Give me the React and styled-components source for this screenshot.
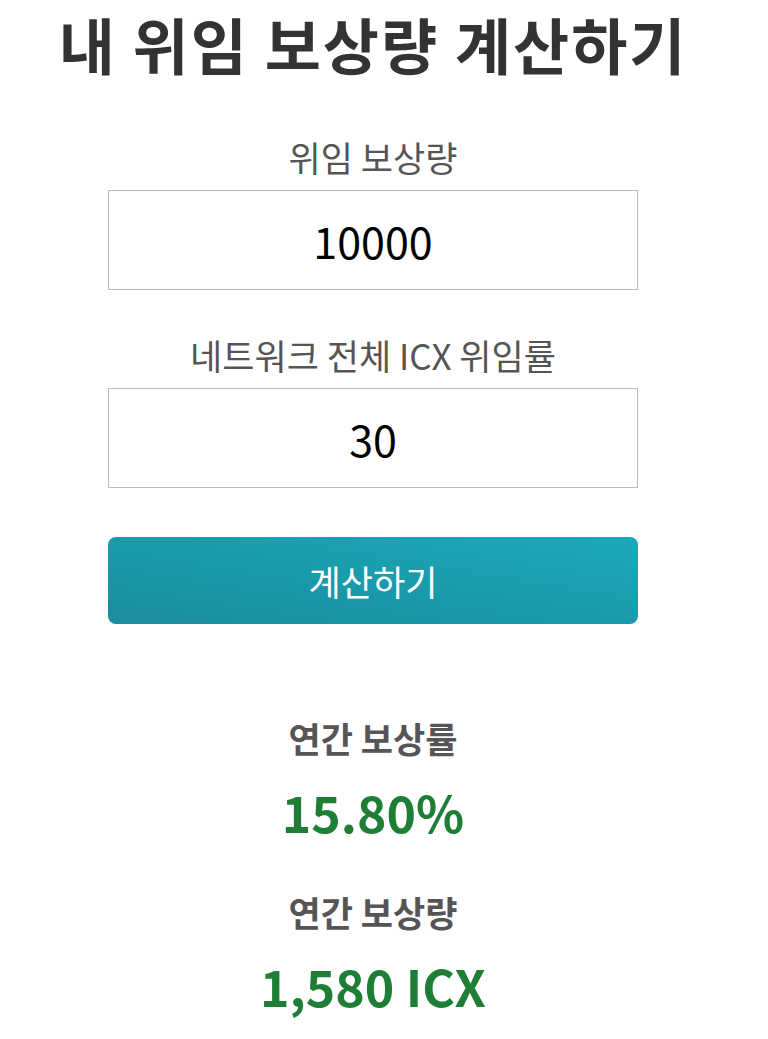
import React, { useState } from "react";
import styled, { createGlobalStyle } from "styled-components";

const GlobalStyle = createGlobalStyle`
  body {
    margin: 0;
    background: #fff;
    font-family: "Noto Sans CJK KR", "Noto Sans", sans-serif;
  }
`;

export default function App() {
  const [amount, setAmount] = useState("10000");
  const [rate, setRate] = useState("30");

  return (
    <>
      <GlobalStyle />
      <Page>
        <Title>내 위임 보상량 계산하기</Title>
        <Form>
          <Label>위임 보상량</Label>
          <Input value={amount} onChange={(e) => setAmount(e.target.value)} />
          <Label>네트워크 전체 ICX 위임률</Label>
          <Input value={rate} onChange={(e) => setRate(e.target.value)} />
          <Button>계산하기</Button>
        </Form>
        <Result>
          <ResultLabel>연간 보상률</ResultLabel>
          <ResultValue>15.80%</ResultValue>
          <ResultLabel>연간 보상량</ResultLabel>
          <ResultValue>1,580 ICX</ResultValue>
        </Result>
      </Page>
    </>
  );
}

const Page = styled.div`
  display: flex;
  flex-direction: column;
  align-items: center;
  padding: 0 22px 0 0;
`;

const Title = styled.h1`
  margin: 0;
  font-size: 61px;
  line-height: 88px;
  font-weight: 700;
  letter-spacing: 2px;
  color: #333;
  white-space: nowrap;
`;

const Form = styled.div`
  width: 530px;
  display: flex;
  flex-direction: column;
  align-items: stretch;
  margin-top: 50px;
`;

const Label = styled.div`
  font-size: 35px;
  line-height: 38px;
  color: #555;
  text-align: center;
  margin-bottom: 14px;
`;

const Input = styled.input`
  box-sizing: border-box;
  height: 100px;
  border: 1px solid #bbb;
  font-family: "Noto Sans CJK KR", sans-serif;
  font-size: 43px;
  color: #000;
  text-align: center;
  outline: none;
  margin-bottom: 46px;
  &:last-of-type {
    margin-bottom: 49px;
  }
`;

const Button = styled.button`
  height: 87px;
  border: none;
  border-radius: 8px;
  background: linear-gradient(to top right, #1a8d9c, #1aa9ba);
  color: #fff;
  font-family: "Noto Sans CJK KR", sans-serif;
  font-size: 35px;
  cursor: pointer;
`;

const Result = styled.div`
  margin-top: 94px;
  display: flex;
  flex-direction: column;
  align-items: center;
`;

const ResultLabel = styled.div`
  font-size: 35px;
  line-height: 40px;
  font-weight: 700;
  color: #555;
`;

const ResultValue = styled.div`
  font-size: 50px;
  line-height: 60px;
  font-weight: 700;
  color: #1f7e36;
  margin: 23px 0 51px;
`;
